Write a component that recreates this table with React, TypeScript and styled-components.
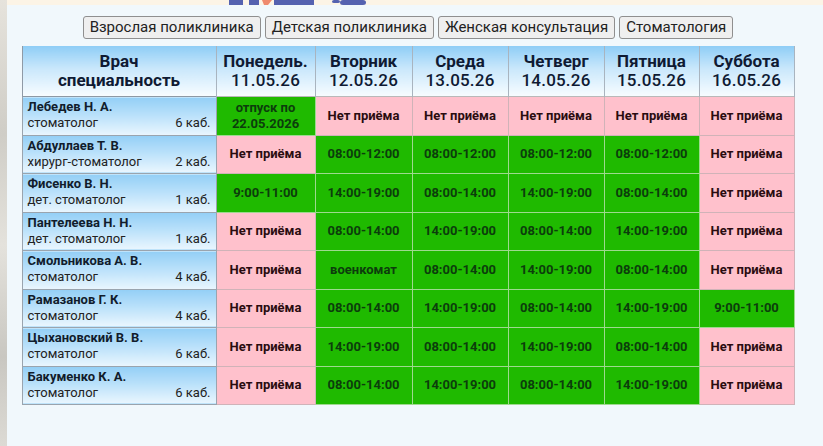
import React from "react";
import styled, { createGlobalStyle } from "styled-components";

const Global = createGlobalStyle`
  html, body { margin: 0; padding: 0; }
  body {
    width: 823px; height: 446px; overflow: hidden;
    background: #d9d8d3;
    font-family: Roboto, "Noto Sans", "Liberation Sans", sans-serif;
  }
`;

const Page = styled.div`
  display: flex;
  width: 823px;
  height: 446px;
`;

const LeftStrip = styled.div`
  width: 7px;
  flex: none;
  background: linear-gradient(180deg, #e6e3dc 0%, #cfcdc6 30%, #e4e2dc 55%, #c9c7c1 80%, #dcdad4 100%);
`;

const Main = styled.div`
  flex: 1;
  display: flex;
  flex-direction: column;
`;

const Banner = styled.div`
  height: 5px;
  flex: none;
  background: #fcf4e6;
  position: relative;
  overflow: hidden;
`;

const Logo = styled.svg`
  position: absolute;
  left: 215px;
  top: 0;
  display: block;
`;

const Panel = styled.div`
  flex: 1;
  background: #f1f8fc;
  padding: 11px 0 0 15px;
`;

const Content = styled.div`
  width: 772px;
  display: flex;
  flex-direction: column;
  align-items: center;
  gap: 7px;
`;

const Tabs = styled.div`
  display: flex;
  gap: 4px;
`;

const Tab = styled.button`
  height: 23px;
  padding: 0 6px;
  font-family: Roboto, "Noto Sans", sans-serif;
  font-size: 15px;
  color: #222;
  background: #efefef;
  border: 1px solid #8f8f8f;
  border-radius: 3px;
  line-height: 21px;
`;

const Table = styled.table`
  width: 772px;
  border-collapse: collapse;
  table-layout: fixed;
`;

const HeadCell = styled.th`
  height: 50px;
  padding: 0;
  background: linear-gradient(180deg, #8ecdf6 0%, #c9e7fb 45%, #f7fcff 100%);
  border-left: 1px solid #a9b4bf;
  border-right: 1px solid #a9b4bf;
  font-size: 17px;
  font-weight: 700;
  line-height: 19px;
  color: #0f1a33;
  text-align: center;
  vertical-align: middle;
  &:first-child { border-left-color: #8f9aa6; }
`;

const DateLine = styled.span`
  display: block;
  font-weight: 500;
  letter-spacing: 0.2px;
`;

const Row = styled.tr`
  height: 38.5px;
`;

const NameCell = styled.td`
  padding: 1px 5px 2px 5px;
  background: linear-gradient(180deg, #93cff6 0%, #b8e0fa 45%, #eaf6fe 100%);
  border: 1px solid #9aa4ae;
  border-top-color: #8d98a3;
  vertical-align: middle;
  font-size: 13px;
  line-height: 16px;
  color: #1a1a1a;
`;

const DocName = styled.div`
  font-weight: 700;
  color: #111c2c;
`;

const SpecLine = styled.div`
  display: flex;
  justify-content: space-between;
  color: #222;
`;

const DayCell = styled.td<{ $on: boolean }>`
  padding: 0 2px;
  text-align: center;
  vertical-align: middle;
  font-size: 13px;
  font-weight: 700;
  line-height: 16px;
  background: ${(p) => (p.$on ? "#1fba00" : "#ffc1cc")};
  color: ${(p) => (p.$on ? "#0c3d0c" : "#2a0c10")};
  border: 1px solid ${(p) => (p.$on ? "#9ed98f" : "#d0b3b8")};
  border-top-color: #b9b9b9;
`;

const days = [
  ["Понедель.", "11.05.26"],
  ["Вторник", "12.05.26"],
  ["Среда", "13.05.26"],
  ["Четверг", "14.05.26"],
  ["Пятница", "15.05.26"],
  ["Суббота", "16.05.26"],
];

const P = "Нет приёма";

const rows: { name: string; spec: string; room: string; days: string[] }[] = [
  { name: "Лебедев Н. А.", spec: "стоматолог", room: "6 каб.", days: ["отпуск по 22.05.2026", P, P, P, P, P] },
  { name: "Абдуллаев Т. В.", spec: "хирург-стоматолог", room: "2 каб.", days: [P, "08:00-12:00", "08:00-12:00", "08:00-12:00", "08:00-12:00", P] },
  { name: "Фисенко В. Н.", spec: "дет. стоматолог", room: "1 каб.", days: ["9:00-11:00", "14:00-19:00", "08:00-14:00", "14:00-19:00", "08:00-14:00", P] },
  { name: "Пантелеева Н. Н.", spec: "дет. стоматолог", room: "1 каб.", days: [P, "08:00-14:00", "14:00-19:00", "08:00-14:00", "14:00-19:00", P] },
  { name: "Смольникова А. В.", spec: "стоматолог", room: "4 каб.", days: [P, "военкомат", "08:00-14:00", "14:00-19:00", "08:00-14:00", P] },
  { name: "Рамазанов Г. К.", spec: "стоматолог", room: "4 каб.", days: [P, "08:00-14:00", "14:00-19:00", "08:00-14:00", "14:00-19:00", "9:00-11:00"] },
  { name: "Цыхановский В. В.", spec: "стоматолог", room: "6 каб.", days: [P, "14:00-19:00", "08:00-14:00", "14:00-19:00", "08:00-14:00", P] },
  { name: "Бакуменко К. А.", spec: "стоматолог", room: "6 каб.", days: [P, "08:00-14:00", "14:00-19:00", "08:00-14:00", "14:00-19:00", P] },
];

const colWidths = [194, 99, 97, 96, 96, 95, 95];

export default function App() {
  return (
    <>
      <Global />
      <Page>
        <LeftStrip />
        <Main>
          <Banner>
            <Logo width="150" height="5" viewBox="0 0 150 5">
              <rect x="7" y="0" width="14" height="5" fill="#5562b0" />
              <rect x="27" y="0" width="10" height="5" fill="#5562b0" />
              <polygon points="40,0 50,0 46,5 42,5" fill="#ef8a6e" />
              <rect x="52" y="0" width="40" height="5" fill="#5562b0" />
              <rect x="110" y="0" width="8" height="3" rx="2" fill="#5562b0" />
              <rect x="118" y="0" width="26" height="5" rx="3" fill="#5562b0" />
            </Logo>
          </Banner>
          <Panel>
            <Content>
              <Tabs>
                <Tab>Взрослая поликлиника</Tab>
                <Tab>Детская поликлиника</Tab>
                <Tab>Женская консультация</Tab>
                <Tab>Стоматология</Tab>
              </Tabs>
              <Table>
                <colgroup>
                  {colWidths.map((w, i) => (
                    <col key={i} style={{ width: w }} />
                  ))}
                </colgroup>
                <thead>
                  <tr>
                    <HeadCell>
                      Врач
                      <br />
                      специальность
                    </HeadCell>
                    {days.map(([d, dt]) => (
                      <HeadCell key={d}>
                        {d}
                        <DateLine>{dt}</DateLine>
                      </HeadCell>
                    ))}
                  </tr>
                </thead>
                <tbody>
                  {rows.map((r) => (
                    <Row key={r.name}>
                      <NameCell>
                        <DocName>{r.name}</DocName>
                        <SpecLine>
                          <span>{r.spec}</span>
                          <span>{r.room}</span>
                        </SpecLine>
                      </NameCell>
                      {r.days.map((d, i) => (
                        <DayCell key={i} $on={d !== P}>
                          {d}
                        </DayCell>
                      ))}
                    </Row>
                  ))}
                </tbody>
              </Table>
            </Content>
          </Panel>
        </Main>
      </Page>
    </>
  );
}
